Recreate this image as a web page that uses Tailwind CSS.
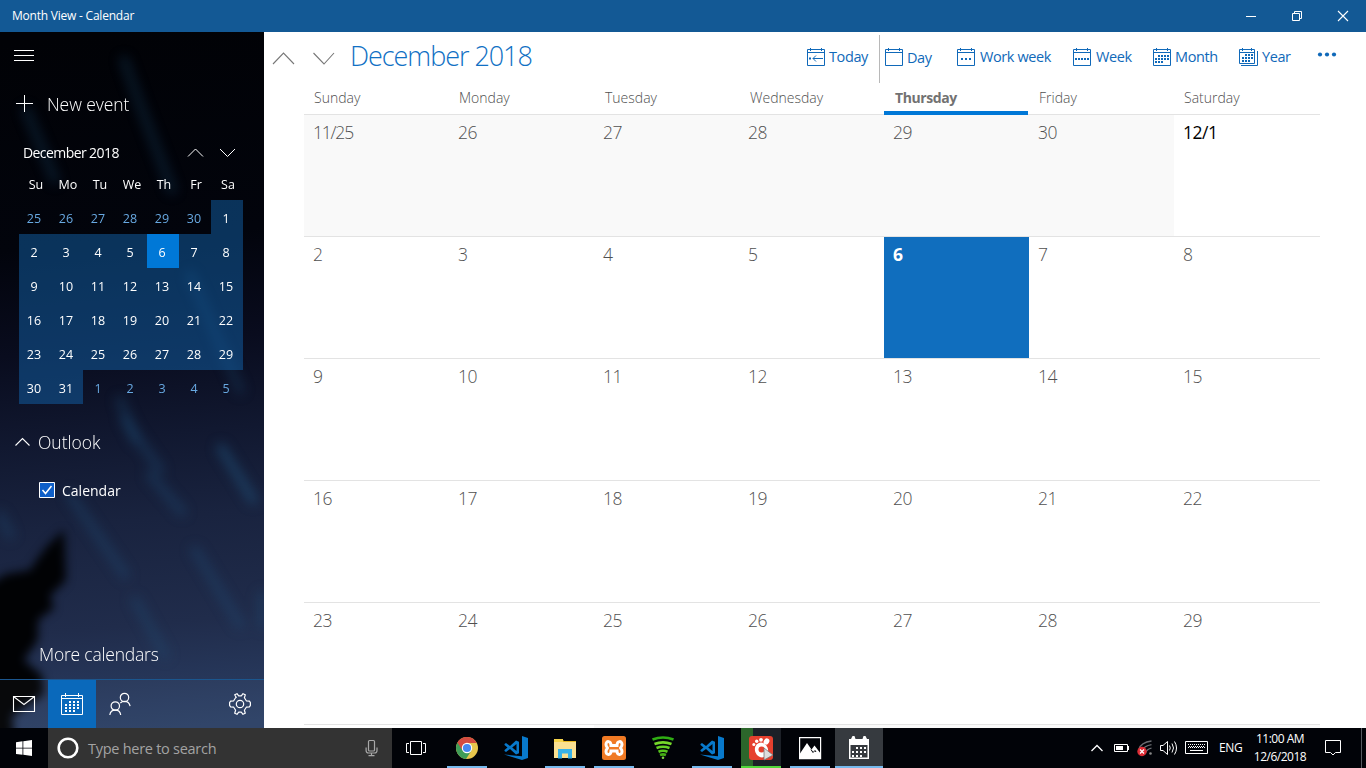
<!DOCTYPE html>
<html lang="en">
<head>
<meta charset="utf-8">
<title>Month View - Calendar</title>
<script src="https://cdn.jsdelivr.net/npm/@tailwindcss/browser@4"></script>
</head>
<body class="w-[1366px] h-[768px] overflow-hidden bg-white font-['Open_Sans','Noto_Sans',sans-serif] flex flex-col">

<header class="h-8 shrink-0 bg-[#135995] flex items-center justify-between text-white">
  <h1 class="pl-3 text-[12px] leading-4 tracking-[-0.22px] whitespace-nowrap">Month View - Calendar</h1>
  <div class="flex">
    <svg class="w-[46px] h-8" viewBox="0 0 46 32" fill="none" stroke="white"><path d="M18 16.5h10"/></svg>
    <svg class="w-[46px] h-8" viewBox="0 0 46 32" fill="none" stroke="white"><path d="M18.5 13.5h7v7h-7zM20.500 13.500v-2h7v7h-2"/></svg>
    <svg class="w-[46px] h-8" viewBox="0 0 46 32" fill="none" stroke="white" stroke-width="1.1"><path d="M18 11l10 10M28 11L18 21"/></svg>
  </div>
</header>

<main class="h-[696px] shrink-0 flex">
  <aside class="relative w-[264px] shrink-0 overflow-hidden bg-black text-white">
    <svg class="absolute inset-0 w-[264px] h-[696px]" viewBox="0 32 264 696">
      <defs>
        <linearGradient id="sky" gradientUnits="userSpaceOnUse" x1="100" y1="32" x2="164" y2="728">
          <stop offset="0" stop-color="#010206"/><stop offset=".3" stop-color="#02040c"/><stop offset=".45" stop-color="#090c1e"/><stop offset=".58" stop-color="#111830"/><stop offset=".7" stop-color="#19233f"/><stop offset=".85" stop-color="#202c4b"/><stop offset="1" stop-color="#2b3f65"/>
        </linearGradient>
        <filter id="b" color-interpolation-filters="sRGB" filterUnits="userSpaceOnUse" x="-40" y="0" width="344" height="760"><feGaussianBlur stdDeviation="6"/></filter>
        <filter id="b2" color-interpolation-filters="sRGB" filterUnits="userSpaceOnUse" x="-40" y="480" width="200" height="290"><feGaussianBlur stdDeviation="5"/></filter>
      </defs>
      <rect y="32" width="264" height="696" fill="url(#sky)"/>
      <g filter="url(#b)" stroke="#1f5078" stroke-width="9" stroke-linecap="round" fill="none">
        <path opacity=".3" d="M124 60L140 105L172 190M26 110L55 180M190 275L240 390"/>
        <path opacity=".6" d="M221 448L253 500"/>
        <path opacity=".38" d="M150 475L182 512M70 495L125 575M195 550L240 625M125 420L160 470"/>
        <path opacity=".35" d="M135 600L165 655M0 515L10 535M120 400L135 440M262 595V625"/>
      </g>
      <path filter="url(#b2)" fill="#010204" d="M64 530L48 545L38 558L30 570L6 574L-20 590V750H16L12 716L44 694L42 675L24 660L38 640L38 620L54 608L50 596L66 580Z"/>
    </svg>
    <div class="relative flex flex-col h-full">
      <svg class="w-12 h-12 shrink-0" viewBox="0 0 48 48" stroke="white"><path d="M14 18.500h20M14 23.500h20M14 28.500h20"/></svg>
      <div class="h-[49px] flex items-center">
        <svg class="w-[47px] h-[49px]" viewBox="0 0 47 49" stroke="white"><path d="M16 23.500h17M24.500 15v17"/></svg>
        <span class="text-[17.500px] leading-6 font-light tracking-[-0.05px] -mt-0.5">New event</span>
      </div>
      <div class="h-[47px] flex items-center pl-[23px] pr-5">
        <span class="flex-1 text-[14px] font-normal tracking-[-0.58px]">December 2018</span>
        <svg class="w-8 h-8" viewBox="0 0 32 32" fill="none" stroke="white" stroke-width="1"><path d="M8 19.500l7.500-7.500 7.500 7.500"/></svg>
        <svg class="w-8 h-8" viewBox="0 0 32 32" fill="none" stroke="white" stroke-width="1"><path d="M8 12l7.500 7.500 7.500-7.500"/></svg>
      </div>
      <div class="ml-[19px] pl-px grid grid-cols-[repeat(7,32px)] h-6 mt-px text-center text-[12.500px] leading-[15px]">
        <span>Su</span><span>Mo</span><span>Tu</span><span>We</span><span>Th</span><span>Fr</span><span>Sa</span>
      </div>
      <div id="mini" class="ml-[19px] -mt-px grid grid-cols-[repeat(7,32px)] auto-rows-[34px] text-center text-[12.500px] leading-[37px]"></div>
      <div class="mt-[15px] h-12 flex items-center">
        <svg class="w-[38px] h-12" viewBox="0 0 38 48" fill="none" stroke="white" stroke-width="1.100"><path d="M15.500 26.500l7-7 7 7"/></svg>
        <span class="text-[17.500px] font-light -mt-0.5">Outlook</span>
      </div>
      <div class="h-12 -mt-px flex items-center pl-[39px] gap-[7px]">
        <svg class="w-4 h-4" viewBox="0 0 16 16"><path d="M.5.5h15v15H.5z" fill="#0f5fc8" stroke="white"/><path d="M3.500 8l3 3.500L12.500 4" fill="none" stroke="white" stroke-width="1.500"/></svg>
        <span class="mt-0.5 text-[14px] leading-5">Calendar</span>
      </div>
      <div class="mt-auto h-12 pl-[39px] flex items-center text-[17.500px] font-light tracking-[-0.2px] whitespace-nowrap"><span class="-mt-0.5">More calendars</span></div>
      <nav class="h-[49px] shrink-0 border-t border-[#1b568e] flex bg-white/[0.03]">
        <svg class="w-12 h-12" viewBox="0 0 48 48" fill="none" stroke="white" stroke-width="1.100"><path d="M13.500 16.500h21v15h-21zM13.500 16.500l10.500 8 10.500-8"/></svg>
        <svg class="w-12 h-12 bg-[#0a69bb]" viewBox="0 0 48 48" fill="none" stroke="white"><path d="M13.500 15.500h21v19h-21zM13.500 18.500h21M17.500 13v4M30.500 13v4"/><path stroke-width="2" stroke-dasharray="2 2" d="M21 22h12M17 25h16M17 28h16M17 31h12"/></svg>
        <svg class="w-12 h-12" viewBox="0 0 48 48" fill="none" stroke="white" stroke-width="1.200"><circle cx="28.500" cy="17.500" r="4.200"/><circle cx="19.300" cy="26" r="4.200"/><path d="M13.800 35c.4-3 2.500-4.900 5.500-4.900s5 1.900 5.400 4.900M24.300 23c1-1 2.500-1.600 4.200-1.600 3 0 5 1.700 5.600 4.800"/></svg>
        <svg class="w-12 h-12 ml-auto" viewBox="0 0 48 48" fill="none" stroke="white" stroke-width="1.200"><circle cx="24" cy="24" r="3.700"/><path stroke-linejoin="round" d="M20.200 17.400L18.700 14.800L21 13.700L22.700 15.800H25.300L27 13.700L29.300 14.800L28.400 17.700L30.300 20.800L33.400 21.200L34.400 22.700V25.300L33.400 26.800L30.300 27.200L28.400 30.300L29.300 33.200L27 34.300L25.300 32.200H22.700L21 34.300L18.700 33.200L19.600 30.300L17.700 27.200L14.600 26.800L13.600 25.300V22.700L14.600 21.200L17.700 20.800L19.600 17.700Z"/></svg>
      </nav>
    </div>
  </aside>

  <section class="w-[1102px] flex flex-col">
    <div class="h-[52px] flex shrink-0 text-[#1069b9]">
      <svg class="w-10 h-[52px]" viewBox="0 0 40 52" fill="none" stroke="#777" stroke-width="1.100"><path d="M9 32l10.500-11L30 32"/></svg>
      <svg class="w-[46px] h-[52px]" viewBox="0 0 46 52" fill="none" stroke="#777" stroke-width="1.100"><path d="M9.500 21L20 32l10-11"/></svg>
      <h2 class="w-[457px] text-[27px] leading-[47px] font-light whitespace-nowrap tracking-[-1.050px] text-[#1070c4]">December 2018</h2>
      <div class="flex text-[14.500px] leading-[50px] whitespace-nowrap tracking-[-0.4px]">
        <div class="w-[72px] flex gap-1">
          <svg class="mt-4 w-[18px] h-[18px] shrink-0" viewBox="0 0 18 18" fill="none" stroke="currentColor"><path d="M.5 1.500h17v16H.5zM.5 4.500h17M3.500 0v3M14.500 0v3M6 10.500h10M9 7.500l-3 3 3 3"/><path stroke-width="2" d="M2 10.500h2"/></svg>
          <span>Today</span>
        </div>
        <div class="w-px h-12 mt-[3px] bg-[#b8b8b8]"></div>
        <div class="w-[77px] pl-[5px] flex gap-1">
          <svg class="mt-4 w-[18px] h-[18px] shrink-0" viewBox="0 0 18 18" fill="none" stroke="currentColor"><path d="M.5 1.500h17v16H.5zM.5 4.500h17M3.500 0v3M14.500 0v3"/></svg>
          <span class="pt-px">Day</span>
        </div>
        <div class="w-[116px] flex gap-[5px]">
          <svg class="mt-4 w-[18px] h-[18px] shrink-0" viewBox="0 0 18 18" fill="none" stroke="currentColor"><path d="M.5 1.500h17v16H.5zM.5 4.500h17M3.500 0v3M14.500 0v3"/><path stroke-width="2" stroke-dasharray="2 2" d="M4 11h10"/></svg>
          <span>Work week</span>
        </div>
        <div class="w-20 flex gap-[5px]">
          <svg class="mt-4 w-[18px] h-[18px] shrink-0" viewBox="0 0 18 18" fill="none" stroke="currentColor"><path d="M.5 1.500h17v16H.5zM.5 4.500h17M3.500 0v3M14.500 0v3"/><path stroke-width="2" stroke-dasharray="2 1" d="M2 11h14"/></svg>
          <span>Week</span>
        </div>
        <div class="w-[86px] flex gap-1">
          <svg class="mt-4 w-[18px] h-[18px] shrink-0" viewBox="0 0 18 18" fill="none" stroke="currentColor"><path d="M.5 1.500h17v16H.5zM.5 4.500h17M3.500 0v3M14.500 0v3"/><path stroke-width="2" stroke-dasharray="2 1" d="M5 8h11M2 11h14M2 14h8"/></svg>
          <span>Month</span>
        </div>
        <div class="w-[78px] flex gap-1">
          <svg class="mt-4 w-[19px] h-[18px] shrink-0" viewBox="0 0 19 18" fill="none" stroke="currentColor"><path d="M.5 1.500h15v14H.5zM.5 4.500h15M3.500 0v3M12.500 0v3M18.500 3v14.500H2"/><path stroke-width="2" stroke-dasharray="2 1" d="M6 7h8M3 10h11M3 13h8"/></svg>
          <span>Year</span>
        </div>
        <svg class="mt-5 w-5 h-1.5" viewBox="0 0 20 6" fill="currentColor"><circle cx="3" cy="2.500" r="2.100"/><circle cx="10" cy="2.500" r="2.100"/><circle cx="17" cy="2.500" r="2.100"/></svg>
      </div>
    </div>
    <div class="ml-10 w-[1016px] h-[31px] shrink-0 border-b border-[#e3e3e3] grid grid-cols-[145px_145px_145px_145px_145px_145px_146px] text-[14px] leading-7 font-light text-[#505050]">
      <span class="pl-2.5">Sunday</span><span class="pl-2.5">Monday</span><span class="pl-[11px]">Tuesday</span><span class="pl-[11px]">Wednesday</span>
      <span class="pl-[11px] mr-px h-[31px] border-b-4 border-[#0078d7] font-bold tracking-[-0.4px] text-[#727272]">Thursday</span>
      <span class="pl-2.5">Friday</span><span class="pl-2.5">Saturday</span>
    </div>
    <div id="month" class="ml-10 w-[1016px] h-[613px] grid grid-cols-[145px_145px_145px_145px_145px_145px_146px] grid-rows-[repeat(5,122px)_3px] text-[17.500px] leading-[34px] font-light text-[#505050]"></div>
  </section>
</main>

<footer class="h-10 shrink-0 bg-[#010308] flex text-white">
  <svg class="w-12 h-10" viewBox="0 0 48 40" fill="white"><path d="M16 14.300l6.500-1v6.400H16zM23.300 13.200L32 12v7.700h-8.700zM16 20.500h6.500v6.300l-6.500-.9zM23.300 20.500H32V28l-8.700-1.200z"/></svg>
  <div class="w-[344px] bg-[#333333] flex items-center">
    <svg class="w-10 h-10" viewBox="0 0 40 40" fill="none"><circle cx="20" cy="20" r="9.300" stroke="white" stroke-width="2.600"/></svg>
    <span class="flex-1 pt-px text-[14.500px] leading-5 text-[#a3a3a3] tracking-[-0.27px]">Type here to search</span>
    <svg class="w-10 h-10" viewBox="0 0 40 40" fill="none" stroke="#a8a8a8" stroke-width="1.200"><rect x="16.500" y="12.500" width="6" height="10.500" rx="1"/><path d="M14.100 19.500v3q0 2.500 2.500 2.500h6q2.400 0 2.400-2.500v-3M19.500 25v3M16.500 27.700h6"/></svg>
  </div>
  <svg class="w-12 h-10" viewBox="0 0 48 40" fill="none" stroke="white"><path d="M18.500 13.500h11v13h-11zM17 15.500h-2.500v9H17M31 15.500h2.500v9H31"/></svg>
  <div class="ml-[3px] flex gap-px">
    <svg class="w-12 h-10" viewBox="0 0 48 40"><circle cx="24" cy="20" r="11" fill="#e7c64c"/><path d="M24 20L14.500 14.500A11 11 0 0 0 23 31L28.500 22.500z" fill="#3f9d58"/><path d="M14.400 14.600A11 11 0 0 1 33.700 15H24L19.500 22.500z" fill="#d44b40"/><circle cx="24" cy="20" r="5.200" fill="white"/><circle cx="24" cy="20" r="4.100" fill="#4688f1"/><path d="M4 38h40v2H4z" fill="#76b9ed"/></svg>
    <svg class="w-12 h-10" viewBox="0 0 48 40"><path fill="#0879cb" d="M30 8l6 2v20l-6 2-18-5.500 18 1.800zM12.500 16l1.500-1 4 3 6-5.500 3 1.300v11.400l-3 1.300-6-5.500-4 3-1.500-1v-1l3-2.500-3-2.500zM24.500 16l-4.300 3.500 4.300 3.500z"/></svg>
    <svg class="w-12 h-10" viewBox="0 0 48 40"><path fill="#e8b81f" d="M13 11h8l2 2h12v6H13z"/><path fill="#fae091" d="M13 14h22v16H13z"/><path fill="#f6d44b" d="M13 11h9v3h-9z"/><path fill="#38b2e8" d="M17 21h14v9.500h-4v-5h-6v5h-4z"/><path d="M4 38h40v2H4z" fill="#76b9ed"/></svg>
    <svg class="w-12 h-10" viewBox="0 0 48 40"><rect x="12" y="8" width="24" height="24" rx="2.500" fill="#f07a24"/><g fill="none" stroke="white" stroke-width="3"><path d="M21 17.500c0-5-5-5-5-1 0 2 1.500 3 1.500 3.500s-1.500 1.500-1.500 3.500c0 4 5 4 5-.5h6c0 4.500 5 4.500 5 .5 0-2-1.500-3-1.500-3.500s1.500-1.500 1.500-3.500c0-4-5-4-5 1z"/></g><path d="M4 38h40v2H4z" fill="#76b9ed"/></svg>
    <svg class="w-12 h-10" viewBox="0 0 48 40" fill="none" stroke-width="2.700"><path stroke="#2fae13" d="M13.500 11.500q10.500-4 21 0"/><path stroke="#76d82a" d="M15.500 16q8.500-3.300 17 0"/><path stroke="#67d126" d="M17.500 20q6.500-2.500 13 0"/><path stroke="#58c51d" d="M19.500 23.700q4.500-1.900 9 0"/><path stroke="#43ae14" d="M21 27q3-1.300 6 0"/><circle cx="24" cy="29.700" r="1.300" fill="#7ed641"/></svg>
    <svg class="w-12 h-10" viewBox="0 0 48 40"><path fill="#0879cb" d="M30 8l6 2v20l-6 2-18-5.500 18 1.800zM12.500 16l1.500-1 4 3 6-5.500 3 1.300v11.400l-3 1.300-6-5.500-4 3-1.500-1v-1l3-2.500-3-2.500zM24.500 16l-4.300 3.500 4.300 3.500z"/><path d="M4 38h40v2H4z" fill="#76b9ed"/></svg>
    <svg class="w-12 h-10" viewBox="0 0 48 40"><path fill="#1c2027" d="M4 0h40v38H4z"/><path fill="#2c662b" d="M4 0h12v38H4z"/><rect x="12" y="8" width="24" height="24" rx="3" fill="#e6402e"/><g fill="white"><ellipse cx="24.500" cy="22" rx="6.500" ry="7.500" transform="rotate(-20 24.500 22)"/><circle cx="16.800" cy="16.500" r="1.500"/><circle cx="19.700" cy="13.300" r="1.700"/><circle cx="24" cy="11.800" r="1.900"/><ellipse cx="29.500" cy="13.500" rx="2.700" ry="3.300" transform="rotate(30 29.500 13.500)"/></g><circle cx="24.500" cy="21.500" r="3" fill="#e6402e"/><path d="M27 20l9 7-9 5z" fill="#ddd" stroke="#777" stroke-width=".8"/><path d="M4 38h40v2H4z" fill="#51d83a"/></svg>
    <svg class="w-12 h-10" viewBox="0 0 48 40"><path fill="none" stroke="white" stroke-width="1.200" d="M13.600 9.600h21v21h-21z"/><path fill="white" d="M14 25.500L21 15l4.500 6.500 3-4L35 26v5H14z"/><path stroke="#010308" stroke-width="1" fill="none" d="M25 21.500l2 3 2-2 1 1.500"/><path d="M4 38h40v2H4z" fill="#76b9ed"/></svg>
    <svg class="w-12 h-10 bg-[#363a3f]" viewBox="0 0 48 40"><path fill="white" d="M14 11h2l1.500-3h2l1 3h7l1-3h2l1.500 3h2v20H14zM15.500 17v12.500h17V17z" fill-rule="evenodd"/><path stroke="white" stroke-width="2" stroke-dasharray="2 2" d="M21 20h11M17 24h14M17 28h10"/><path d="M0 38h48v2H0z" fill="#76b9ed"/></svg>
  </div>
  <div class="ml-auto flex items-center">
    <svg class="w-[130px] h-10" viewBox="1085 0 130 40" fill="none" stroke="white">
      <path stroke-width="1.300" d="M1091.500 23l5.500-5.500 5.500 5.500"/>
      <path d="M1114.500 16.500h13v7h-13zM1128.500 18v4"/><path fill="white" stroke="none" d="M1116 18h7v4h-7z"/>
      <g stroke="#6a6d72" stroke-width="1.300"><path d="M1139 21q2-6.500 12.500-8M1142 23q2-5 9.500-6.300M1145.500 25q1.500-4 6-4.800"/></g><circle cx="1150.500" cy="25.500" r="1.300" fill="#888" stroke="none"/>
      <circle cx="1142" cy="23.500" r="4.700" fill="#dd2c35" stroke="none"/><path stroke-width="1.200" d="M1140 21.500l4 4M1144 21.500l-4 4"/>
      <path d="M1160.500 17.500h2.500l4.500-4v13l-4.500-4h-2.500zM1169.500 17.500q1.500 2.500 0 5M1172 15.500q3 4.500 0 9M1174.500 13.500q4 6.500 0 13"/>
      <path d="M1185.500 13.500h22v12h-22z"/><path stroke-dasharray="1 1" d="M1188 16.500h18M1188 19.500h18M1189 18.500h16"/><path d="M1190 22.500h13"/>
    </svg>
    <span class="w-[37px] pl-1 text-[12px] tracking-[-0.3px]">ENG</span>
    <div class="w-[58px] pr-0.5 text-center text-[12px] leading-[18px] tracking-[-0.5px] whitespace-nowrap -mt-px"><div>11:00 AM</div><div>12/6/2018</div></div>
    <svg class="w-[56px] h-10" viewBox="1310 0 56 40" fill="none" stroke="white"><path d="M1325.500 12.500h15v12h-5l-2.500 2.500-2.500-2.500h-5z"/><path stroke="#555a60" d="M1361.500 0v40"/></svg>
  </div>
</footer>

<script>
  const mini = document.getElementById('mini');
  for (let i = 0; i < 42; i++) {
    const cell = document.createElement('span');
    const day = i - 5;
    const inMonth = day >= 1 && day <= 31;
    cell.textContent = day < 1 ? day + 30 : day > 31 ? day - 31 : day;
    cell.className = day === 6 ? 'bg-[#0078d7] pr-0.5' : inMonth ? 'bg-[#1261aa]/50 pr-0.5' : 'text-[#68a9e2] pr-0.5';
    mini.append(cell);
  }
  const month = document.getElementById('month');
  for (let i = 0; i < 35; i++) {
    const cell = document.createElement('div');
    const day = i - 5;
    cell.textContent = i === 0 ? '11/25' : day < 1 ? day + 30 : day === 1 ? '12/1' : day;
    cell.className = i === 0 ? 'bg-[#f9f9f9] border-b border-[#e3e3e3] pl-[9px] tracking-[-1.200px]'
      : day < 1 ? 'bg-[#f9f9f9] border-b border-[#e3e3e3] pl-[9px] tracking-[-0.4px]'
      : day === 1 ? 'text-black font-normal border-b border-[#e3e3e3] pl-[9px] tracking-[-0.5px]'
      : day === 6 ? 'bg-[#106ebe] text-white font-bold border-b border-[#e3e3e3] pl-[9px]'
      : 'border-b border-[#e3e3e3] pl-[9px] tracking-[-0.4px]';
    month.append(cell);
  }
  // Top edge of the sixth week, which starts with two December days.
  for (let i = 0; i < 7; i++) {
    const cell = document.createElement('div');
    cell.className = i < 2 ? 'bg-white' : 'bg-[#f9f9f9]';
    month.append(cell);
  }
</script>
</body>
</html>
